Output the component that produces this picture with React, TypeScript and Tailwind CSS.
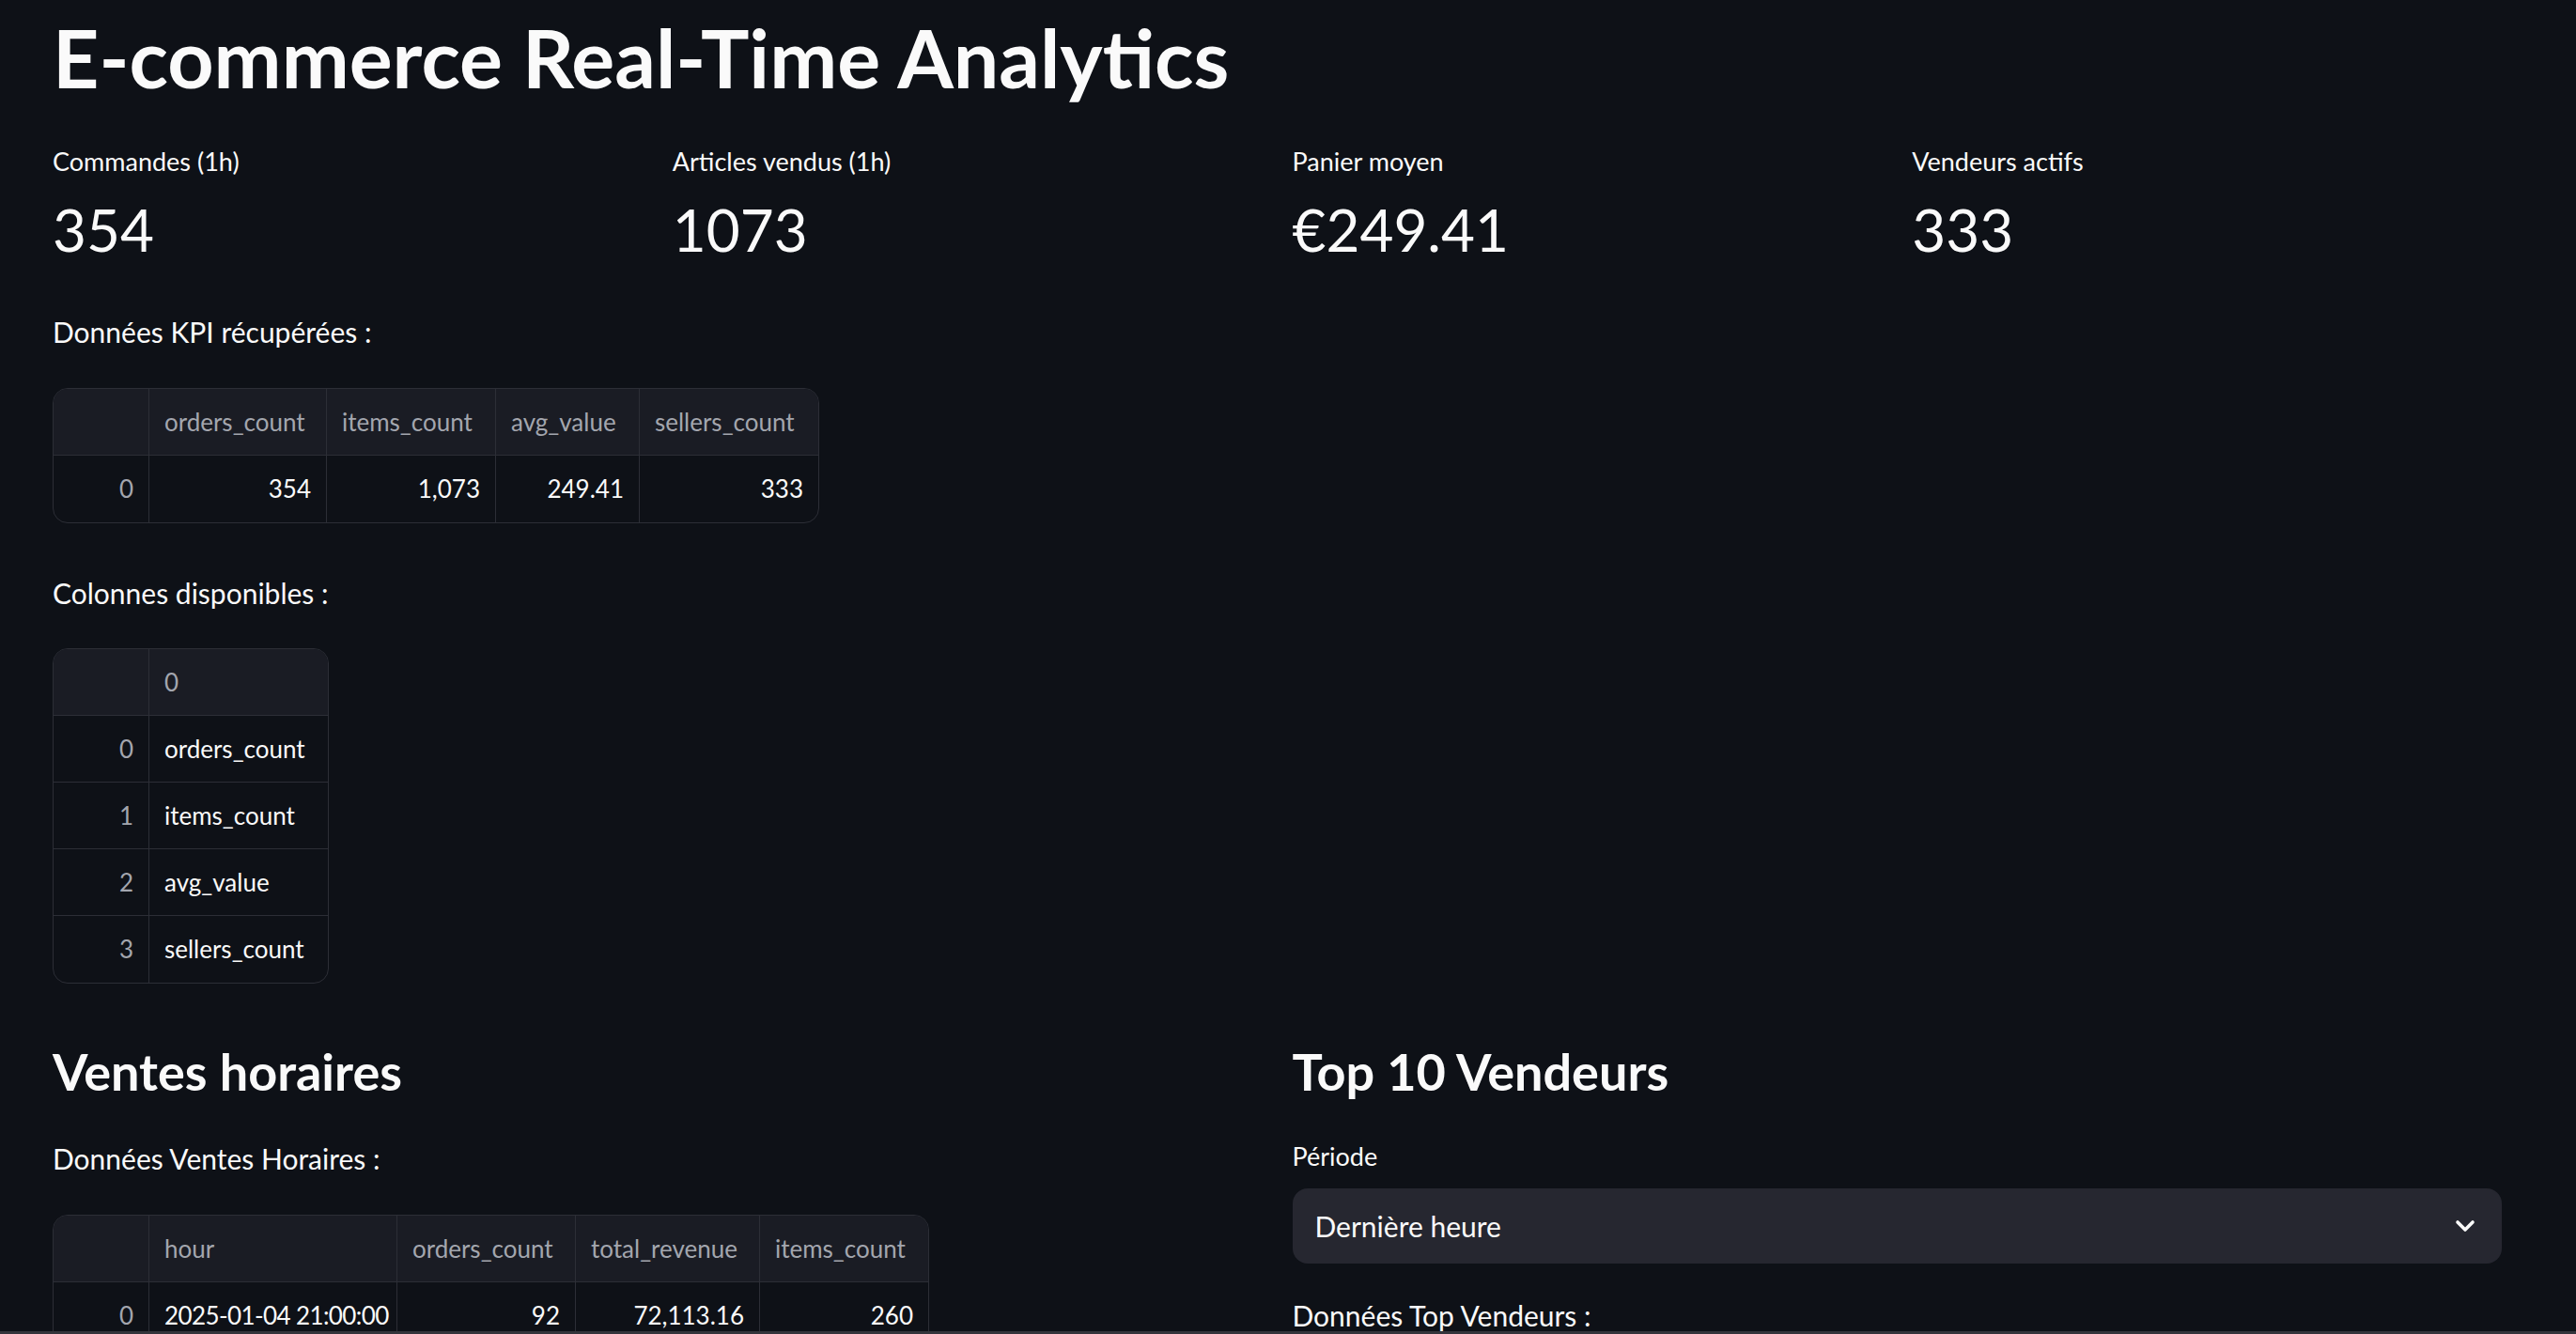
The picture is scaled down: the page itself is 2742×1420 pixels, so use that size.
const font = "font-['Lato','Noto_Sans',sans-serif]";

type Col = { name: string; w: string; align?: "left" | "right"; extra?: string };

const kpiCols: Col[] = [
  { name: "", w: "w-[101px]" },
  { name: "orders_count", w: "w-[189px]", align: "right" },
  { name: "items_count", w: "w-[180px]", align: "right" },
  { name: "avg_value", w: "w-[153px]", align: "right" },
  { name: "sellers_count", w: "w-[191px]", align: "right" },
];

const colsCols: Col[] = [
  { name: "", w: "w-[101px]" },
  { name: "0", w: "w-[191px]", align: "left" },
];

const hourlyCols: Col[] = [
  { name: "", w: "w-[101px]" },
  { name: "hour", w: "w-[264px]", align: "left", extra: "tracking-[-0.6px]" },
  { name: "orders_count", w: "w-[190px]", align: "right" },
  { name: "total_revenue", w: "w-[196px]", align: "right" },
  { name: "items_count", w: "w-[180px]", align: "right" },
];

function DataFrame({ cols, rows }: { cols: Col[]; rows: string[][] }) {
  return (
    <div className="w-fit overflow-hidden whitespace-nowrap rounded-[16px] border border-[#2c2e36] text-[26px]">
      <div className="flex h-[71px] border-b border-[#2c2e36] bg-[#1a1c24]">
        {cols.map((c, i) => (
          <div
            key={i}
            className={`${c.w} flex items-center overflow-hidden px-[16px] text-[#a3a6ae] ${i > 0 ? "border-l border-[#2c2e36]" : ""}`}
          >
            {c.name}
          </div>
        ))}
      </div>
      {rows.map((row, r) => (
        <div key={r} className={`flex h-[71px] ${r < rows.length - 1 ? "border-b border-[#2c2e36]" : ""}`}>
          <div className={`${cols[0].w} flex items-center justify-end px-[16px] text-[#a3a6ae]`}>{r}</div>
          {row.map((cell, i) => {
            const c = cols[i + 1];
            return (
              <div
                key={i}
                className={`${c.w} flex items-center overflow-hidden border-l border-[#2c2e36] px-[16px] text-[#fafafa] ${c.align === "right" ? "justify-end" : "justify-start"} ${c.extra ?? ""}`}
              >
                {cell}
              </div>
            );
          })}
        </div>
      ))}
    </div>
  );
}

function Metric({ label, value }: { label: string; value: string }) {
  return (
    <div>
      <p className="h-[36px] text-[27px] leading-[36px]">{label}</p>
      <p className="mt-[14px] h-[77px] text-[62px] leading-[80px]">{value}</p>
    </div>
  );
}

export default function App() {
  return (
    <div className={`flex h-[1420px] flex-col overflow-hidden bg-[#0e1117] text-[#fafafa] ${font}`}>
      <main className="flex-1 overflow-hidden pl-[56px] pr-[79px] pt-[11px]">
        <h1 className="h-[100px] text-[86px] font-bold leading-[100px]">E-commerce Real-Time Analytics</h1>

        <div className="mt-[43px] grid grid-cols-4 gap-[32px]">
          <Metric label="Commandes (1h)" value="354" />
          <Metric label="Articles vendus (1h)" value="1073" />
          <Metric label="Panier moyen" value="€249.41" />
          <Metric label="Vendeurs actifs" value="333" />
        </div>

        <p className="mt-[52px] h-[40px] text-[30px] leading-[40px]">Données KPI récupérées :</p>
        <div className="mt-[40px]">
          <DataFrame cols={kpiCols} rows={[["354", "1,073", "249.41", "333"]]} />
        </div>

        <p className="mt-[54px] h-[40px] text-[30px] leading-[40px]">Colonnes disponibles :</p>
        <div className="mt-[39px]">
          <DataFrame
            cols={colsCols}
            rows={[["orders_count"], ["items_count"], ["avg_value"], ["sellers_count"]]}
          />
        </div>

        <div className="mt-[62px] grid grid-cols-2 gap-[32px]">
          <section>
            <h3 className="h-[64px] text-[54px] font-bold leading-[64px]">Ventes horaires</h3>
            <p className="mt-[40px] h-[40px] text-[30px] leading-[40px]">Données Ventes Horaires :</p>
            <div className="mt-[40px]">
              <DataFrame
                cols={hourlyCols}
                rows={[["2025-01-04 21:00:00", "92", "72,113.16", "260"]]}
              />
            </div>
          </section>

          <section>
            <h3 className="h-[64px] text-[54px] font-bold leading-[64px]">Top 10 Vendeurs</h3>
            <p className="mt-[40px] h-[36px] text-[27px] leading-[36px]">Période</p>
            <div className="mt-[16px] flex h-[80px] items-center justify-between rounded-[16px] bg-[#262730] pl-[24px] pr-[28px] text-[30px]">
              <span>Dernière heure</span>
              <svg width="22" height="14" viewBox="0 0 22 14" fill="none" aria-hidden="true">
                <path d="M3 3l8 8 8-8" stroke="#fafafa" strokeWidth="3.6" strokeLinecap="round" strokeLinejoin="round" />
              </svg>
            </div>
            <p className="mt-[35px] h-[40px] text-[30px] leading-[40px]">Données Top Vendeurs :</p>
          </section>
        </div>
      </main>
      <div className="h-[3px] shrink-0 bg-[#33343b]" />
    </div>
  );
}
